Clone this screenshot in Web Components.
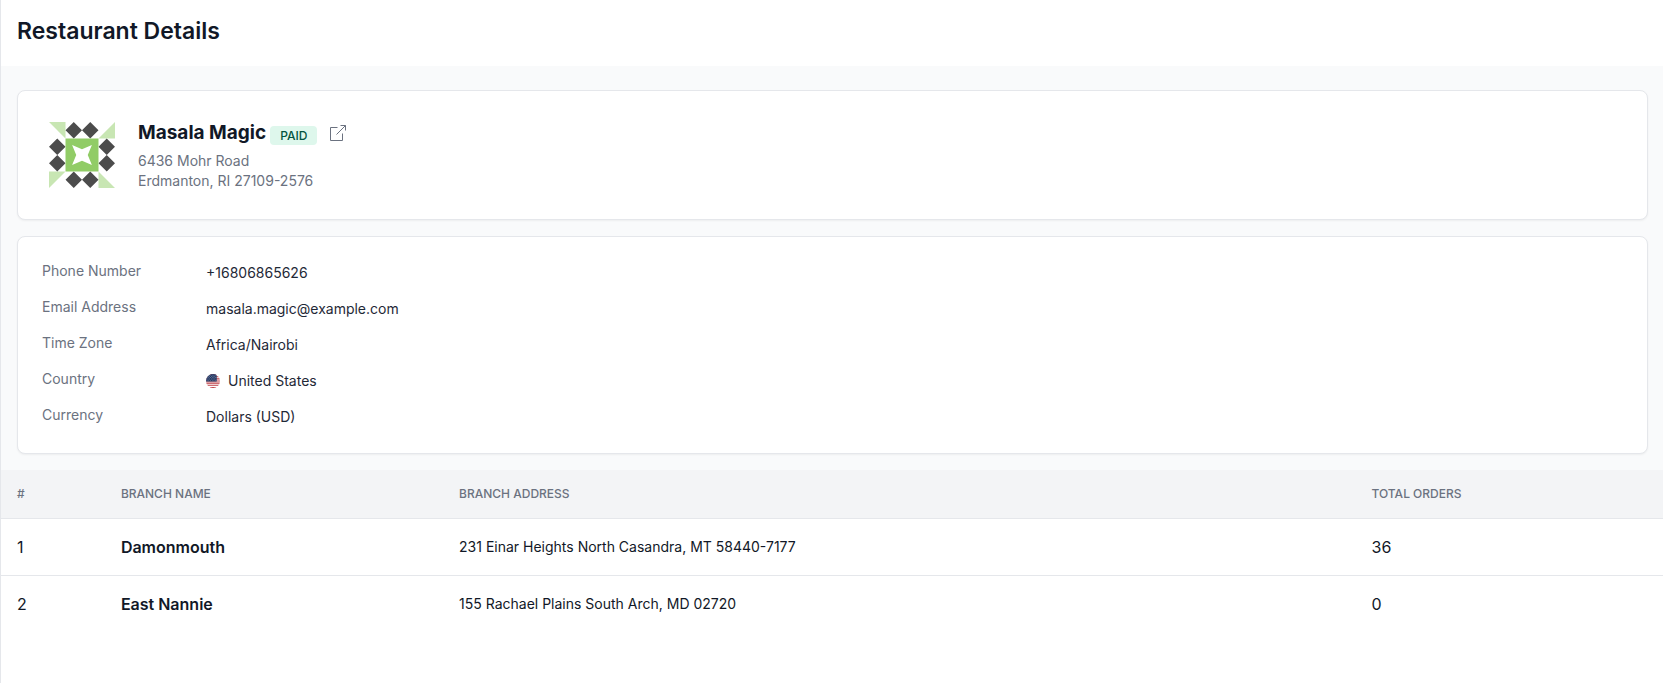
<!DOCTYPE html>
<html lang="en">
<head>
<meta charset="utf-8">
<meta name="viewport" content="width=device-width, initial-scale=1">
<title>Restaurant Details</title>
<style>
  :root {
    --gray-50: #f9fafb;
    --gray-100: #f3f4f6;
    --gray-200: #e5e7eb;
    --gray-500: #6b7280;
    --gray-800: #1f2937;
    --gray-900: #111827;
  }

  body {
    margin: 0;
    font-family: Inter, "Liberation Sans", sans-serif;
    font-size: 14px;
    line-height: 20px;
    color: var(--gray-900);
    background-color: #fff;
  }
</style>
</head>
<body>
<restaurant-page title="Restaurant Details">
  <base-card>
    <restaurant-summary name="Masala Magic" status="PAID">
      <restaurant-avatar slot="avatar"></restaurant-avatar>
      <div>6436 Mohr Road</div>
      <div>Erdmanton, RI 27109-2576</div>
    </restaurant-summary>
  </base-card>
  <base-card>
    <detail-row label="Phone Number">+16806865626</detail-row>
    <detail-row label="Email Address">masala.magic@example.com</detail-row>
    <detail-row label="Time Zone">Africa/Nairobi</detail-row>
    <detail-row label="Country"><flag-us></flag-us>United States</detail-row>
    <detail-row label="Currency">Dollars (USD)</detail-row>
  </base-card>
  <branch-table slot="table"></branch-table>
</restaurant-page>

<script>
class RestaurantPage extends HTMLElement {
  constructor() {
    super();
    this.attachShadow({ mode: "open" });
  }

  static get styles() {
    return /* css */`
      :host {
        display: block;
        box-sizing: border-box;
        min-height: 100vh;
        border-left: 1px solid var(--gray-200);
      }

      header {
        padding: 15px 16px 19px;
      }

      h1 {
        margin: 0;
        font-size: 23px;
        line-height: 32px;
        font-weight: 600;
      }

      .cards {
        display: flex;
        flex-direction: column;
        gap: 16px;
        padding: 24px 15px 16px 16px;
        background-color: var(--gray-50);
      }
    `;
  }

  connectedCallback() {
    this.render();
  }

  render() {
    this.shadowRoot.innerHTML = /* html */`
    <style>${RestaurantPage.styles}</style>
    <header><h1>${this.getAttribute("title")}</h1></header>
    <main>
      <div class="cards"><slot></slot></div>
      <slot name="table"></slot>
    </main>`;
  }
}

class BaseCard extends HTMLElement {
  constructor() {
    super();
    this.attachShadow({ mode: "open" });
  }

  static get styles() {
    return /* css */`
      :host {
        display: flex;
        flex-direction: column;
        gap: 12px;
        padding: 24px;
        border: 1px solid var(--gray-200);
        border-radius: 8px;
        background-color: #fff;
        box-shadow: 0 1px 2px rgba(0, 0, 0, 0.05);
      }
    `;
  }

  connectedCallback() {
    this.shadowRoot.innerHTML = /* html */`
    <style>${BaseCard.styles}</style>
    <slot></slot>`;
  }
}

class RestaurantSummary extends HTMLElement {
  constructor() {
    super();
    this.attachShadow({ mode: "open" });
  }

  static get styles() {
    return /* css */`
      :host {
        display: flex;
        align-items: center;
        gap: 16px;
      }

      .title {
        display: flex;
        align-items: center;
        margin-bottom: 4px;
      }

      h2 {
        margin: 0;
        font-size: 19px;
        line-height: 28px;
        font-weight: 700;
      }

      .badge {
        align-self: flex-end;
        margin: 0 12px 2px 4px;
        padding: 2px 10px;
        border-radius: 4px;
        font-size: 12px;
        line-height: 15px;
        font-weight: 500;
        color: #03543f;
        background-color: #def7ec;
      }

      a {
        display: flex;
        color: var(--gray-500);
      }

      .address {
        color: var(--gray-500);
      }
    `;
  }

  connectedCallback() {
    this.name = this.getAttribute("name") || "-";
    this.status = this.getAttribute("status") || "";
    this.render();
  }

  render() {
    this.shadowRoot.innerHTML = /* html */`
    <style>${RestaurantSummary.styles}</style>
    <slot name="avatar"></slot>
    <div>
      <div class="title">
        <h2>${this.name}</h2>
        <span class="badge">${this.status}</span>
        <a href="#" aria-label="Open restaurant">
          <svg width="18" height="18" viewBox="0 0 18 18" fill="none" stroke="currentColor" aria-hidden="true">
            <path d="M8.5 3.5h-7v13h12v-7M11.5 1.5h5v5M16.5 1.5l-9 9"/>
          </svg>
        </a>
      </div>
      <div class="address"><slot></slot></div>
    </div>`;
  }
}

class RestaurantAvatar extends HTMLElement {
  constructor() {
    super();
    this.attachShadow({ mode: "open" });
  }

  static get styles() {
    return /* css */`
      :host {
        display: block;
        flex: none;
      }

      svg {
        display: block;
      }
    `;
  }

  connectedCallback() {
    // 4x4 grid of 20 unit cells, with a margin round it
    this.shadowRoot.innerHTML = /* html */`
    <style>${RestaurantAvatar.styles}</style>
    <svg width="80" height="80" viewBox="-8.5 -8.5 97 97" aria-hidden="true">
      <path fill="#c8e6b3" d="M0 0h20v20zM80 0v20H60zM80 80H60V60zM0 80V60h20z"/>
      <path fill="#4c4c4c" d="M30 0l10 10-10 10-10-10zM50 0l10 10-10 10-10-10zM30 60l10 10-10 10-10-10zM50 60l10 10-10 10-10-10zM10 20l10 10-10 10L0 30zM10 40l10 10-10 10L0 50zM70 20l10 10-10 10-10-10zM70 40l10 10-10 10-10-10z"/>
      <path fill="#91cc66" d="M20 20h40v40H20z"/>
      <path fill="#fff" d="M28 28l12 5 12-5-5 12 5 12-12-5-12 5 5-12z"/>
    </svg>`;
  }
}

class DetailRow extends HTMLElement {
  constructor() {
    super();
    this.attachShadow({ mode: "open" });
  }

  static get styles() {
    return /* css */`
      :host {
        display: block;
      }

      dl {
        display: grid;
        grid-template-columns: 148px 1fr;
        gap: 16px;
        margin: 0;
      }

      dt {
        color: var(--gray-500);
      }

      dd {
        display: flex;
        align-items: center;
        gap: 8px;
        margin: 0;
        line-height: 24px;
        color: var(--gray-800);
      }
    `;
  }

  connectedCallback() {
    this.shadowRoot.innerHTML = /* html */`
    <style>${DetailRow.styles}</style>
    <dl>
      <dt>${this.getAttribute("label")}</dt>
      <dd><slot></slot></dd>
    </dl>`;
  }
}

class FlagUs extends HTMLElement {
  constructor() {
    super();
    this.attachShadow({ mode: "open" });
  }

  static get styles() {
    return /* css */`
      :host {
        display: block;
        width: 14px;
        height: 14px;
        border-radius: 50%;
        overflow: hidden;
      }

      svg {
        display: block;
      }
    `;
  }

  connectedCallback() {
    this.shadowRoot.innerHTML = /* html */`
    <style>${FlagUs.styles}</style>
    <svg width="14" height="14" viewBox="0 0 130 130" aria-hidden="true">
      <path fill="#fff" d="M0 0h130v130H0z"/>
      <path stroke="#bd3d44" stroke-width="10" d="M0 5h130M0 25h130M0 45h130M0 65h130M0 85h130M0 105h130M0 125h130"/>
      <path fill="#192f5d" d="M0 0h99v70H0z"/>
      <path fill="none" stroke="#fff" stroke-width="4" stroke-linecap="round" stroke-dasharray="0 16" d="M10 10h88M18 22h80M10 34h88M18 46h80M10 58h88"/>
    </svg>`;
  }
}

class BranchTable extends HTMLElement {
  constructor() {
    super();
    this.attachShadow({ mode: "open" });
    this.branches = [
      { name: "Damonmouth", address: "231 Einar Heights North Casandra, MT 58440-7177", orders: 36 },
      { name: "East Nannie", address: "155 Rachael Plains South Arch, MD 02720", orders: 0 }
    ];
  }

  static get styles() {
    return /* css */`
      :host {
        display: block;
      }

      table {
        width: 100%;
        table-layout: fixed;
        border-spacing: 0;
      }

      .number {
        width: 6.25%;
      }

      .name {
        width: 20.35%;
      }

      .address {
        width: 54.9%;
      }

      th, td {
        box-sizing: border-box;
        padding: 16px;
        text-align: left;
      }

      th {
        font-size: 12px;
        line-height: 16px;
        font-weight: 500;
        color: var(--gray-500);
        background-color: var(--gray-100);
        border-bottom: 1px solid var(--gray-200);
      }

      td {
        font-size: 16px;
        line-height: 24px;
      }

      tr:not(:last-child) td {
        border-bottom: 1px solid var(--gray-200);
      }

      td.name {
        font-weight: 600;
      }

      td.address {
        font-size: 14px;
      }
    `;
  }

  connectedCallback() {
    this.render();
  }

  getRow(branch, index) {
    return /* html */`
      <tr>
        <td>${index + 1}</td>
        <td class="name">${branch.name}</td>
        <td class="address">${branch.address}</td>
        <td>${branch.orders}</td>
      </tr>
    `;
  }

  render() {
    this.shadowRoot.innerHTML = /* html */`
    <style>${BranchTable.styles}</style>
    <table>
      <thead>
        <tr>
          <th class="number">#</th>
          <th class="name">BRANCH NAME</th>
          <th class="address">BRANCH ADDRESS</th>
          <th>TOTAL ORDERS</th>
        </tr>
      </thead>
      <tbody>${this.branches.map(this.getRow).join("")}</tbody>
    </table>`;
  }
}

customElements.define("restaurant-page", RestaurantPage);
customElements.define("base-card", BaseCard);
customElements.define("restaurant-summary", RestaurantSummary);
customElements.define("restaurant-avatar", RestaurantAvatar);
customElements.define("detail-row", DetailRow);
customElements.define("flag-us", FlagUs);
customElements.define("branch-table", BranchTable);
</script>
</body>
</html>
